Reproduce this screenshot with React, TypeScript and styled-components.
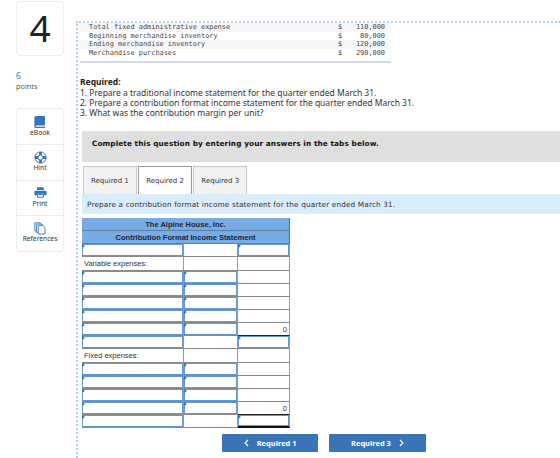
import styled, { createGlobalStyle } from 'styled-components';

const blue = '#3973b8';

const ledger = [
  { label: 'Total fixed administrative expense', amount: '110,000' },
  { label: 'Beginning merchandise inventory', amount: '80,000' },
  { label: 'Ending merchandise inventory', amount: '120,000' },
  { label: 'Merchandise purchases', amount: '290,000' },
];

type Cell = { kind?: 'input' | 'plain'; text?: string; rule?: 'single' | 'double' };

const input: Cell = { kind: 'input' };
const blank: Cell = {};
const line: Cell[] = [input, input, blank];
const subtotal: Cell[] = [input, input, { text: '0', rule: 'single' }];

const rows: Cell[][] = [
  [input, blank, input],
  [{ text: 'Variable expenses:' }, blank, blank],
  line,
  line,
  line,
  line,
  subtotal,
  [input, blank, input],
  [{ text: 'Fixed expenses:' }, blank, blank],
  line,
  line,
  line,
  subtotal,
  [input, blank, { kind: 'input', rule: 'double' }],
];

const BookIcon = () => (
  <svg width='12' height='13' viewBox='0 0 12 13'>
    <path d='M2 0h9v9.6H2.6a.7.7 0 0 0 0 1.5H11v.9H2a1.6 1.6 0 0 1-1.6-1.6V1.6A1.6 1.6 0 0 1 2 0z' fill={blue} />
    <path d='M2.5 10.3H11' stroke='#a9c4e4' strokeWidth='.8' />
  </svg>
);

const HintIcon = () => (
  <svg width='13' height='13' viewBox='0 0 13 13' fill='none' stroke={blue}>
    <circle cx='6.5' cy='6.5' r='5.6' strokeWidth='1' />
    <circle cx='6.5' cy='6.5' r='2.5' strokeWidth='1' />
    <path d='M6.5 1v3M6.5 9v3M1 6.5h3M9 6.5h3' strokeWidth='2.8' />
  </svg>
);

const PrintIcon = () => (
  <svg width='13' height='11' viewBox='0 0 13 11'>
    <path d='M3 .3h6l1 1V3H3z' fill={blue} />
    <path d='M1.5 3.8h10q1 0 1 1v3.4H10V6.8H3v1.4H.5V4.8q0-1 1-1z' fill={blue} />
    <path d='M3.5 7.5h6v2.7h-6z' fill='#fff' stroke={blue} />
  </svg>
);

const PagesIcon = () => (
  <svg width='12' height='13' viewBox='0 0 12 13' fill='#fff' stroke={blue} strokeWidth='.9'>
    <path d='M.8.8h5.4v8H.8z' />
    <path d='M2.4 2.1h5.8v8.2H2.4z' />
    <path d='M4.2 3.6h4.6l2.2 2V12H4.2z' />
  </svg>
);

const tools = [
  { name: 'eBook', Icon: BookIcon },
  { name: 'Hint', Icon: HintIcon },
  { name: 'Print', Icon: PrintIcon },
  { name: 'References', Icon: PagesIcon },
];

const tabs = ['Required 1', 'Required 2', 'Required 3'];

const App = () => {
  return (
    <Page>
      <GlobalStyle />
      <Sidebar>
        <QuestionNumber>4</QuestionNumber>
        <Points>
          <strong>6</strong>
          <span>points</span>
        </Points>
        <Tools>
          {tools.map(({ name, Icon }) => (
            <Tool key={name}>
              <i>
                <Icon />
              </i>
              <span>{name}</span>
            </Tool>
          ))}
        </Tools>
      </Sidebar>

      <Content>
        <Ledger>
          {ledger.map(({ label, amount }) => (
            <LedgerRow key={label}>
              <span>{label}</span>
              <span>$</span>
              <span>{amount}</span>
            </LedgerRow>
          ))}
        </Ledger>

        <Instructions>
          <Heading>Required:</Heading>
          <p>1. Prepare a traditional income statement for the quarter ended March 31.</p>
          <p>2. Prepare a contribution format income statement for the quarter ended March 31.</p>
          <p>3. What was the contribution margin per unit?</p>
        </Instructions>

        <Worksheet>
          <Banner>Complete this question by entering your answers in the tabs below.</Banner>
          <Tabs>
            {tabs.map((tab) => (
              <Tab key={tab} $active={tab === 'Required 2'}>
                {tab}
              </Tab>
            ))}
          </Tabs>
          <Prompt>Prepare a contribution format income statement for the quarter ended March 31.</Prompt>

          <Statement>
            <Title>The Alpine House, Inc.</Title>
            <Title>Contribution Format Income Statement</Title>
            {rows.map((row, r) =>
              row.map((cell, c) => (
                <StatementCell key={`${r}-${c}`} $input={cell.kind === 'input'} $rule={cell.rule} $right={c === 2}>
                  {cell.text}
                </StatementCell>
              ))
            )}
          </Statement>

          <Pager>
            <PagerButton>
              <Chevron viewBox='0 0 5 8'>
                <path d='M4 .8L1.2 4 4 7.2' />
              </Chevron>
              Required 1
            </PagerButton>
            <PagerButton>
              Required 3
              <Chevron viewBox='0 0 5 8'>
                <path d='M1 .8L3.8 4 1 7.2' />
              </Chevron>
            </PagerButton>
          </Pager>
        </Worksheet>
      </Content>
    </Page>
  );
};

const GlobalStyle = createGlobalStyle`
  * {
    box-sizing: border-box;
  }
  body {
    margin: 0;
    background: #fff;
    overflow: hidden;
  }
`;

const Page = styled.div`
  display: flex;
  width: 560px;
  height: 458px;
  overflow: hidden;
  color: #333;
  font-family: 'Noto Sans', sans-serif;
`;

const Sidebar = styled.aside`
  width: 76px;
  flex: none;
  padding: 1px 12px 0 16px;
`;

const QuestionNumber = styled.div`
  height: 55px;
  border: 1px solid #ececec;
  border-radius: 4px;
  color: #222;
  font-size: 37px;
  line-height: 51px;
  text-align: center;
`;

const Points = styled.div`
  display: flex;
  flex-direction: column;
  height: 52px;
  padding-top: 14px;
  font-size: 7.3px;
  line-height: 10px;
  color: #555;

  strong {
    color: ${blue};
    font-size: 8.5px;
    font-weight: 400;
    line-height: 12px;
  }
  span {
    line-height: 9px;
  }
`;

const Tools = styled.div`
  border: 1px solid #ececec;
  border-radius: 4px;
`;

const Tool = styled.div`
  display: flex;
  flex-direction: column;
  align-items: center;
  height: 35.4px;
  padding-top: 6px;
  font-size: 6.7px;
  line-height: 7px;
  color: #333;

  & + & {
    padding-top: 5px;
    border-top: 1px solid #ececec;
  }
  i {
    display: flex;
    align-items: center;
    height: 14px;
  }
  span {
    white-space: nowrap;
  }
`;

const Content = styled.main`
  flex: 1;
  min-width: 0;
  margin-top: 21px;
  padding-left: 2px;
  border-top: 2px dotted #b4d0ea;
  border-left: 2px dotted #b4d0ea;
`;

const Ledger = styled.div`
  width: 311px;
  height: 40px;
  border-bottom: 2px solid #d5d9e7;
`;

const LedgerRow = styled.div`
  display: grid;
  grid-template-columns: 249px 9px 38px;
  height: 8.6px;
  padding-left: 9px;
  color: #444;
  font-family: 'DejaVu Sans Mono', monospace;
  font-size: 6.9px;
  line-height: 8.6px;
  white-space: pre;

  &:nth-child(odd) {
    background: #f6f6f6;
  }
  span:last-child {
    text-align: right;
  }
`;

const Instructions = styled.section`
  height: 68px;
  padding-top: 13px;
  font-size: 8.5px;
  line-height: 10.2px;
  white-space: nowrap;

  p {
    margin: 0;
  }
`;

const Heading = styled.h2`
  margin: 0 0 1px;
  color: #222;
  font-size: 8.5px;
  font-weight: 700;
  line-height: 11px;
`;

const Worksheet = styled.section`
  padding-left: 2px;
`;

const Banner = styled.div`
  height: 30.5px;
  padding-left: 10px;
  background: #dfdfdf;
  color: #111;
  font-family: 'DejaVu Sans', sans-serif;
  font-size: 7.3px;
  font-weight: 700;
  letter-spacing: 0.11px;
  line-height: 25px;
  white-space: nowrap;
`;

const Tabs = styled.div`
  display: flex;
  gap: 1.4px;
  height: 32px;
  padding: 4px 0 0 1px;
`;

const Tab = styled.div<{ $active: boolean }>`
  width: 53.8px;
  border: 1px solid ${({ $active }) => ($active ? '#999' : '#c8c8c8')};
  border-bottom: 0;
  background: ${({ $active }) => ($active ? '#fff' : '#f2f2f2')};
  font-family: 'DejaVu Sans', sans-serif;
  font-size: 7px;
  line-height: 28px;
  text-align: center;
`;

const Prompt = styled.div`
  height: 20.5px;
  margin-bottom: 4px;
  padding-left: 5px;
  background: #d9ecfa;
  font-family: 'DejaVu Sans', sans-serif;
  font-size: 7.3px;
  letter-spacing: 0.15px;
  line-height: 22px;
  white-space: nowrap;
`;

const Statement = styled.div`
  display: grid;
  grid-template-columns: 102px 54px 52px;
  grid-auto-rows: 13.15px;
  width: 208px;
  font-family: 'Liberation Sans', Arial, sans-serif;
`;

const Title = styled.div`
  grid-column: 1 / -1;
  border-right: 1px solid #5d6d80;
  border-bottom: 1px solid #5c7ea8;
  background: #78abe5;
  color: #223;
  font-size: 7.55px;
  font-weight: 700;
  line-height: 13px;
  text-align: center;
`;

const StatementCell = styled.div<{ $input: boolean; $rule?: 'single' | 'double'; $right: boolean }>`
  position: relative;
  padding: 0 2px;
  border-right: 1px solid #999;
  border-bottom: ${({ $rule }) =>
    $rule === 'double' ? '2px solid #111' : `1px solid ${$rule ? '#222' : '#888'}`};
  box-shadow: ${({ $input }) => ($input ? 'inset 0 0 0 1px #6496d0' : 'none')};
  font-size: 7.5px;
  line-height: 13px;
  text-align: ${({ $right }) => ($right ? 'right' : 'left')};
  white-space: nowrap;

  /* entry marker */
  &::before {
    content: ${({ $input }) => ($input ? "''" : 'none')};
    position: absolute;
    top: 0;
    left: 0;
    border: 2px solid transparent;
    border-left: 3px solid ${blue};
  }
`;

const Pager = styled.div`
  display: flex;
  gap: 11px;
  padding: 5.5px 0 0 140px;
`;

const PagerButton = styled.button`
  display: flex;
  align-items: center;
  justify-content: center;
  gap: 8px;
  width: 96.3px;
  height: 18.5px;
  padding: 0;
  border: 0;
  border-radius: 1px;
  background: ${blue};
  color: #fff;
  font-family: 'Noto Sans', sans-serif;
  font-size: 7.5px;
  font-weight: 700;
`;

const Chevron = styled.svg`
  width: 5px;
  height: 8px;
  fill: none;
  stroke: #fff;
  stroke-width: 1.2;
`;

export default App;
